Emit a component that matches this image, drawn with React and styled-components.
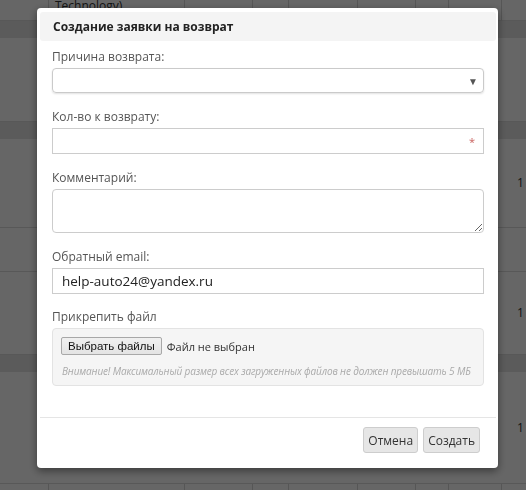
import React from 'react'
import styled, { createGlobalStyle } from 'styled-components'

const GlobalStyle = createGlobalStyle`
    *{
        box-sizing: border-box;
    }
    body{
        margin: 0;
        width: 526px;
        height: 490px;
        overflow: hidden;
        font-family: "Open Sans", "Liberation Sans", sans-serif;
        background: #fff;
    }
`

const columns = '49px 136px 68px 36px 69px 58px 33px 53px 1fr'

const Table = styled.div`
    display: flex;
    flex-direction: column;
    width: 526px;
    height: 490px;
    background: #fff;
`

const Row = styled.div`
    display: grid;
    grid-template-columns: ${columns};
    height: ${props => props.h}px;
    flex-shrink: 0;
    border-bottom: 1px solid #dcdcdc;
`

const Band = styled.div`
    height: ${props => props.h}px;
    flex-shrink: 0;
    background: #e4e4e4;
`

const Cell = styled.div`
    display: flex;
    align-items: ${props => props.top ? 'flex-end' : 'center'};
    padding-left: ${props => props.last ? 15 : 6}px;
    padding-bottom: ${props => props.top ? 14 : 0}px;
    border-right: 1px solid ${props => props.lined ? '#d6d6d6' : 'transparent'};
    font-size: 12px;
    color: #333;
    line-height: 12px;
`

const Backdrop = styled.div`
    position: fixed;
    inset: 0;
    background: rgba(0, 0, 0, 0.6);
`

const Modal = styled.div`
    position: fixed;
    left: 37px;
    top: 8px;
    width: 461px;
    height: 460px;
    display: flex;
    flex-direction: column;
    background: #fff;
    border-radius: 4px;
    padding: 4px 2px 0 3px;
    box-shadow: 0 3px 9px rgba(0, 0, 0, 0.45);
`

const Header = styled.div`
    height: 29px;
    display: flex;
    align-items: center;
    padding-left: 13px;
    background: #f4f4f4;
    border-radius: 3px;
    h2{
        margin: 0;
        font-size: 12px;
        font-weight: 700;
        color: #222;
    }
`

const Body = styled.div`
    padding: 7px 12px 0 12px;
    height: 376px;
`

const Group = styled.div`
    display: flex;
    flex-direction: column;
    margin-bottom: ${props => props.mb ?? 15}px;
`

const Label = styled.label`
    font-size: 12px;
    line-height: 18px;
    color: #555;
    margin-bottom: 2px;
`

const SelectBox = styled.div`
    height: 25px;
    border: 1px solid #cacaca;
    border-radius: 4px;
    box-shadow: 0 1px 2px rgba(0, 0, 0, 0.12);
    display: flex;
    align-items: center;
    justify-content: flex-end;
    padding-right: 5px;
    font-size: 10px;
    color: #555;
`

const Field = styled.input`
    height: 26px;
    border: 1px solid #ccc;
    border-radius: 0;
    padding: 0 9px;
    font-family: "Open Sans", sans-serif;
    font-size: 13.5px;
    color: #222;
    outline: none;
`

const RequiredWrap = styled.div`
    position: relative;
    display: flex;
    flex-direction: column;
    span{
        position: absolute;
        right: 9px;
        top: 6px;
        font-size: 11px;
        color: #c9625f;
    }
`

const Area = styled.textarea`
    height: 44px;
    border: 1px solid #ccc;
    border-radius: 4px;
    resize: vertical;
    outline: none;
    display: block;
`

const FileBox = styled.div`
    height: 58px;
    background: #f5f5f5;
    border: 1px solid #e3e3e3;
    border-radius: 4px;
    padding: 8px 8px 0 8px;
    display: flex;
    flex-direction: column;
    gap: 9px;
`

const FileRow = styled.div`
    display: flex;
    align-items: center;
    gap: 5px;
    font-size: 11px;
    color: #333;
`

const ChooseBtn = styled.button`
    height: 18px;
    padding: 0 6px;
    font-family: "Liberation Sans", Arial, sans-serif;
    font-size: 11.5px;
    color: #111;
    background: linear-gradient(#f0f0f0, #e3e3e3);
    border: 1px solid #a8a8a8;
    border-radius: 2px;
    line-height: 16px;
`

const Note = styled.div`
    font-size: 10px;
    font-style: italic;
    letter-spacing: -0.15px;
    white-space: nowrap;
    color: #aaa;
    padding-left: 1px;
`

const Footer = styled.div`
    border-top: 1px solid #e5e5e5;
    display: flex;
    justify-content: flex-end;
    gap: 5px;
    padding: 9px 16px 0 0;
`

const Button = styled.button`
    height: 26px;
    padding: 0 4px;
    font-family: "Open Sans", sans-serif;
    font-size: 12px;
    color: #333;
    background: #e6e6e6;
    border: 1px solid #cdcdcd;
    border-radius: 3px;
`

const cols = [0, 1, 2, 3, 4, 5, 6, 7, 8]

const bgRows = [
    { type: 'row', h: 21, lined: true, first: true },
    { type: 'band', h: 17 },
    { type: 'row', h: 84 },
    { type: 'band', h: 17 },
    { type: 'row', h: 89, one: true },
    { type: 'row', h: 44 },
    { type: 'row', h: 83, one: true },
    { type: 'band', h: 17 },
    { type: 'row', h: 112, one: true },
    { type: 'row', h: 10, lined: true },
]

export default function App() {
    return (
        <>
            <GlobalStyle />
            <Table>
                {bgRows.map((r, i) => r.type === 'band'
                    ? <Band key={i} h={r.h} />
                    : (
                        <Row key={i} h={r.h}>
                            {cols.map(c => (
                                <Cell key={c} lined={r.lined && c < 8} top={r.first} last={c === 8}>
                                    {r.first && c === 1 ? 'Technology)' : ''}
                                    {r.one && c === 8 ? '1' : ''}
                                </Cell>
                            ))}
                        </Row>
                    ))}
            </Table>
            <Backdrop />
            <Modal>
                <Header>
                    <h2>Создание заявки на возврат</h2>
                </Header>
                <Body>
                    <Group>
                        <Label>Причина возврата:</Label>
                        <SelectBox>▼</SelectBox>
                    </Group>
                    <Group>
                        <Label>Кол-во к возврату:</Label>
                        <RequiredWrap>
                            <Field defaultValue='' />
                            <span>*</span>
                        </RequiredWrap>
                    </Group>
                    <Group>
                        <Label>Комментарий:</Label>
                        <Area defaultValue='' />
                    </Group>
                    <Group mb={14}>
                        <Label>Обратный email:</Label>
                        <Field defaultValue='help-auto24@yandex.ru' />
                    </Group>
                    <Group mb={0}>
                        <Label>Прикрепить файл</Label>
                        <FileBox>
                            <FileRow>
                                <ChooseBtn>Выбрать файлы</ChooseBtn>
                                <span>Файл не выбран</span>
                            </FileRow>
                            <Note>Внимание! Максимальный размер всех загруженных файлов не должен превышать 5 МБ</Note>
                        </FileBox>
                    </Group>
                </Body>
                <Footer>
                    <Button>Отмена</Button>
                    <Button>Создать</Button>
                </Footer>
            </Modal>
        </>
    )
}
